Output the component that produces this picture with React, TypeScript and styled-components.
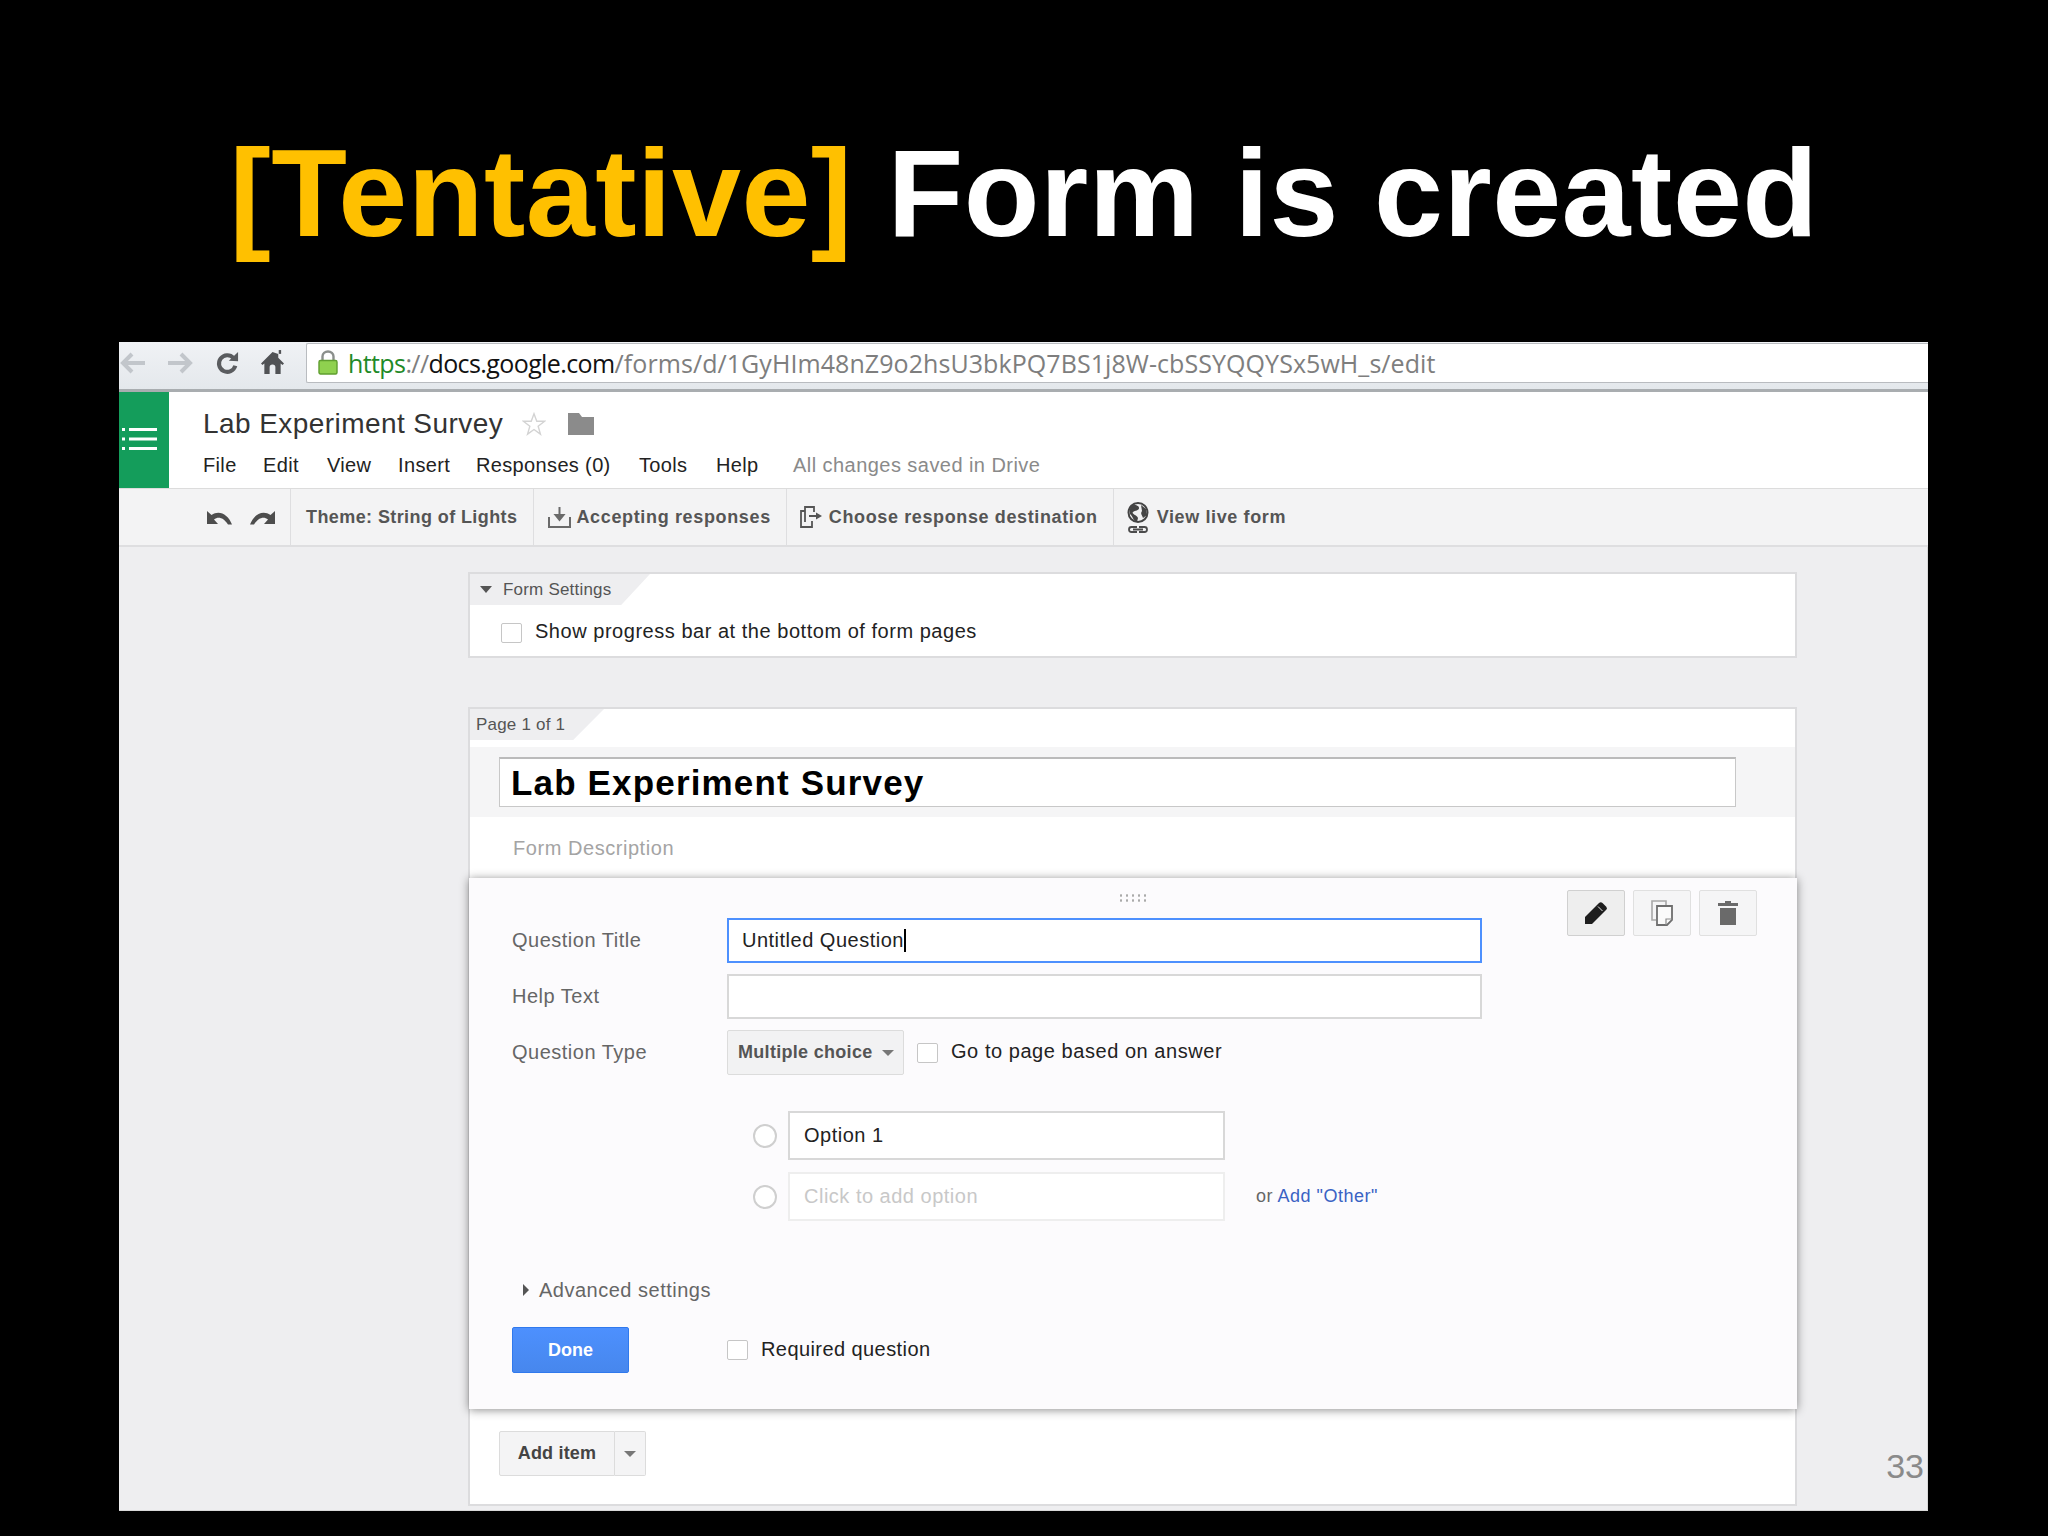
import React from "react";
import styled, { createGlobalStyle } from "styled-components";

const GlobalStyle = createGlobalStyle`
  html, body {
    margin: 0;
    padding: 0;
    background: #000;
  }
  body {
    font-family: "Liberation Sans", Arial, sans-serif;
  }
`;

const MENU_ITEMS = [
  { label: "File", width: 60 },
  { label: "Edit", width: 64 },
  { label: "View", width: 71 },
  { label: "Insert", width: 78 },
  { label: "Responses (0)", width: 163 },
  { label: "Tools", width: 77 },
  { label: "Help", width: 77 },
];

const BackIcon = () => (
  <svg width="26" height="24" viewBox="0 0 26 24">
    <path d="M12 3 3 12l9 9M3 12h22" fill="none" stroke="#c2c6cb" strokeWidth="4" />
  </svg>
);

const ForwardIcon = () => (
  <svg width="26" height="24" viewBox="0 0 26 24">
    <path d="M14 3l9 9-9 9M23 12H1" fill="none" stroke="#c2c6cb" strokeWidth="4" />
  </svg>
);

const ReloadIcon = () => (
  <svg width="26" height="24" viewBox="0 0 26 26">
    <path d="M20 7.500A9 9 0 1 0 22 16" fill="none" stroke="#5a5c5f" strokeWidth="4.400" />
    <path d="M15 10.500 25 11V1z" fill="#5a5c5f" />
  </svg>
);

const HomeIcon = () => (
  <svg width="23" height="25" viewBox="0 0 24 26">
    <path d="M12 2 0 14l1.500 1.500L3.500 14v11H9v-7a3 3 0 0 1 6 0v7h5.500V14l2 1.500L24 14l-6-6V4L12 2z" fill="#505255" />
    <path d="M18.500 0h2.500v4h-2.500z" fill="#505255" />
  </svg>
);

const LockIcon = () => (
  <svg width="20" height="25" viewBox="0 0 20 25">
    <path d="M4.500 11V6.500a5.500 5 0 0 1 11 0V11" fill="none" stroke="#8b8f8c" strokeWidth="2.400" />
    <rect x="1" y="10.500" width="18" height="13.500" rx="1.500" fill="#8fd14f" stroke="#5f9e2f" strokeWidth="1.400" />
  </svg>
);

const ListIcon = () => (
  <svg width="36" height="24" viewBox="0 0 36 24">
    <path d="M1 1h3v3H1zM1 10.500h3v3H1zM1 20h3v3H1z" fill="#fff" />
    <path d="M8 1h28v3H8zM8 10.500h28v3H8zM8 20h28v3H8z" fill="#fff" />
  </svg>
);

const StarIcon = () => (
  <svg width="24" height="26" viewBox="0 0 26 26">
    <path d="M13 2l3 8h8.500l-7 5.500L20 24l-7-5-7 5 2.500-8.500-7-5.500H10z" fill="none" stroke="#d3d3d3" strokeWidth="1.500" />
  </svg>
);

const FolderIcon = () => (
  <svg width="26" height="22" viewBox="0 0 26 22">
    <path d="M0 0h11l3 4h12v18H0z" fill="#8b8b8b" />
  </svg>
);

const UndoIcon = ({ flip }: { flip?: boolean }) => (
  <svg width="25" height="15" viewBox="0 0 25 15" style={flip ? { transform: "scaleX(-1)" } : undefined}>
    <path d="M0 1v13h11L7 9.500c4-3 9-2.500 14 5h4C21 4 12-.5 4.500 5z" fill="#4d4d4d" />
  </svg>
);

const AcceptIcon = () => (
  <svg width="23" height="22" viewBox="0 0 23 22">
    <path d="M1 11v10h21V11" fill="none" stroke="#6a6a6a" strokeWidth="2" />
    <path d="M11.500 1v10M7.500 9l4 5 4-5z" fill="#6a6a6a" stroke="#6a6a6a" strokeWidth="2" />
  </svg>
);

const DestinationIcon = () => (
  <svg width="22" height="22" viewBox="0 0 22 22">
    <path d="M5 16V1h9v5" fill="none" stroke="#555" strokeWidth="1.800" />
    <path d="M5 5H1v16h11v-6" fill="none" stroke="#555" strokeWidth="1.800" />
    <path d="M9 10h8" stroke="#555" strokeWidth="2" />
    <path d="M16 6.500l6 3.500-6 3.500z" fill="#555" />
  </svg>
);

const LiveFormIcon = () => (
  <svg width="22" height="31" viewBox="0 0 22 31">
    <circle cx="11" cy="10.500" r="9.500" fill="#f1f1f2" stroke="#444" strokeWidth="2" />
    <path d="M7 2c2 2 5 1 5 4s-4 2-6 4 4 3 5 6l-1 4C6 19 6 14 3 12 2 8 3 4 7 2zM14 3l5 4 1 6-4 3c-1-3-3-4-1-7z" fill="#444" />
    <path d="M10 25H4.500a2.500 2.500 0 0 0 0 5H10M12 25h5.500a2.500 2.500 0 0 1 0 5H12M6 27.500h10" fill="none" stroke="#4c4c4c" strokeWidth="1.800" />
  </svg>
);

const PencilIcon = () => (
  <svg width="22" height="22" viewBox="0 0 22 22">
    <path d="M0 22v-7L14 1a2.500 2.500 0 0 1 3.500 0L21 4.500a2.500 2.500 0 0 1 0 3.500L7 22z" fill="#1e1e1e" />
    <path d="M13 4.500 17.500 9" stroke="#e6e6e6" strokeWidth="1" />
  </svg>
);

const CopyIcon = () => (
  <svg width="22" height="26" viewBox="0 0 22 26">
    <path d="M15 5V1H1v19h4" fill="none" stroke="#a8a8a8" strokeWidth="1.600" />
    <path d="M6 6h15v14l-5 5H6z" fill="#fafafa" stroke="#6e6e6e" strokeWidth="1.800" />
    <path d="M21 19h-6v6" fill="none" stroke="#8a8a8a" strokeWidth="1.200" />
  </svg>
);

const TrashIcon = () => (
  <svg width="20" height="24" viewBox="0 0 20 24">
    <path d="M7 0h6v2h7v3H0V2h7zM2 7h16v17H2z" fill="#6a6a6a" />
  </svg>
);

export default function App() {
  return (
    <>
      <GlobalStyle />
      <Slide>
        <Heading>
          <Accent>[Tentative]</Accent> Form is created
        </Heading>
        <Shot>
          <BrowserBar>
            <NavIcons>
              <BackIcon />
              <ForwardIcon />
              <ReloadIcon />
              <HomeIcon />
            </NavIcons>
            <UrlBox>
              <LockIcon />
              <UrlText>
                <Https>https</Https>://<Domain>docs.google.com</Domain><UrlPath>/forms/d/1GyHIm48nZ9o2hsU3bkPQ7BS1j8W-cbSSYQQYSx5wH_s/edit</UrlPath>
              </UrlText>
            </UrlBox>
          </BrowserBar>

          <AppHeader>
            <AppTile>
              <ListIcon />
            </AppTile>
            <HeaderBody>
              <DocTitleRow>
                <DocTitle>Lab Experiment Survey</DocTitle>
                <StarIcon />
                <FolderSlot><FolderIcon /></FolderSlot>
              </DocTitleRow>
              <MenuRow>
                {MENU_ITEMS.map((item) => (
                  <MenuItem key={item.label} $width={item.width}>{item.label}</MenuItem>
                ))}
                <SavedNote>All changes saved in Drive</SavedNote>
              </MenuRow>
            </HeaderBody>
          </AppHeader>

          <Toolbar>
            <UndoGroup>
              <UndoIcon />
              <UndoIcon flip />
            </UndoGroup>
            <ToolItem $left={15} $right={16} $gap={5}>
              <ToolText $spacing={0.41}>Theme: String of Lights</ToolText>
            </ToolItem>
            <ToolItem $left={14} $right={15} $gap={5}>
              <AcceptIcon />
              <ToolText $spacing={0.65}>Accepting responses</ToolText>
            </ToolItem>
            <ToolItem $left={13} $right={15} $gap={7}>
              <DestinationIcon />
              <ToolText $spacing={0.62}>Choose response destination</ToolText>
            </ToolItem>
            <ToolItem $left={13} $right={14} $gap={8} $last>
              <LiveFormIcon />
              <ToolText $spacing={0.62}>View live form</ToolText>
            </ToolItem>
          </Toolbar>

          <Canvas>
            <SettingsPanel>
              <SettingsTab>
                <DownArrow />
                <TabText>Form Settings</TabText>
              </SettingsTab>
              <CheckRow $top={15} $left={31}>
                <Checkbox />
                <BodyText $spacing={0.53}>Show progress bar at the bottom of form pages</BodyText>
              </CheckRow>
            </SettingsPanel>

            <PagePanel>
              <PageTab>
                <TabText>Page 1 of 1</TabText>
              </PageTab>
              <TitleBand>
                <TitleInput>Lab Experiment Survey</TitleInput>
              </TitleBand>
              <Description>Form Description</Description>

              <QuestionCard>
                <DragHandle />
                <QuestionFields>
                  <FieldRow>
                    <FieldLabel>Question Title</FieldLabel>
                    <TextBox $focused>Untitled Question<Caret /></TextBox>
                  </FieldRow>
                  <FieldRow>
                    <FieldLabel>Help Text</FieldLabel>
                    <TextBox />
                  </FieldRow>
                  <FieldRow>
                    <FieldLabel>Question Type</FieldLabel>
                    <TypeRow>
                      <TypeSelect>
                        Multiple choice
                        <SmallDownArrow />
                      </TypeSelect>
                      <Checkbox />
                      <BodyText $spacing={0.55}>Go to page based on answer</BodyText>
                    </TypeRow>
                  </FieldRow>
                  <OptionList>
                    <OptionRow>
                      <Radio />
                      <OptionBox>Option 1</OptionBox>
                    </OptionRow>
                    <OptionRow>
                      <Radio />
                      <OptionBox $ghost>Click to add option</OptionBox>
                      <OtherNote>or <OtherLink>Add "Other"</OtherLink></OtherNote>
                    </OptionRow>
                  </OptionList>
                  <AdvancedRow>
                    <RightArrow />
                    <FieldLabel>Advanced settings</FieldLabel>
                  </AdvancedRow>
                  <DoneRow>
                    <DoneButton>Done</DoneButton>
                    <Checkbox />
                    <BodyText $spacing={0.42}>Required question</BodyText>
                  </DoneRow>
                </QuestionFields>
                <QuestionTools>
                  <ToolButton $active><PencilIcon /></ToolButton>
                  <ToolButton><CopyIcon /></ToolButton>
                  <ToolButton><TrashIcon /></ToolButton>
                </QuestionTools>
              </QuestionCard>

              <PanelFooter>
                <AddItemButton>Add item</AddItemButton>
                <AddItemCaret><SmallDownArrow /></AddItemCaret>
              </PanelFooter>
            </PagePanel>
            <SlideNumber>33</SlideNumber>
          </Canvas>
        </Shot>
      </Slide>
    </>
  );
}

const Slide = styled.div`
  width: 2048px;
  height: 1536px;
  background: #000;
  overflow: hidden;
`;

const Heading = styled.h1`
  box-sizing: border-box;
  height: 342px;
  margin: 0;
  padding-top: 124px;
  font-size: 124px;
  line-height: 138px;
  font-weight: 700;
  letter-spacing: 0.5px;
  text-align: center;
  color: #fff;
  white-space: nowrap;
`;

const Accent = styled.span`
  color: #ffc000;
`;

const Shot = styled.div`
  width: 1809px;
  height: 1169px;
  margin-left: 119px;
  background: #eeeef0;
  box-shadow: inset -1px -1px 0 #d8d8d8;
  display: flex;
  flex-direction: column;
`;

const BrowserBar = styled.div`
  box-sizing: border-box;
  height: 50px;
  display: flex;
  align-items: center;
  background: linear-gradient(#f0f2f5, #e4e8ec);
  border-bottom: 3px solid #a9adb0;
  padding-bottom: 6px;
`;

const NavIcons = styled.div`
  width: 187px;
  flex: none;
  display: flex;
  align-items: center;
  gap: 21px;
  padding-left: 1px;
  box-sizing: border-box;
`;

const UrlBox = styled.div`
  flex: 1;
  height: 40px;
  box-sizing: border-box;
  background: #fff;
  border: 1px solid #b9bcc0;
  border-right: none;
  border-radius: 2px 0 0 2px;
  display: flex;
  align-items: center;
  gap: 10px;
  padding-left: 11px;
`;

const UrlText = styled.div`
  font-family: "Open Sans", sans-serif;
  font-size: 25px;
  letter-spacing: -0.6px;
  color: #7e7e7e;
  white-space: nowrap;
`;

const Https = styled.span`
  color: #1f8a28;
`;

const Domain = styled.span`
  color: #111;
`;

const UrlPath = styled.span`
  letter-spacing: 0.07px;
`;

const AppHeader = styled.div`
  height: 97px;
  flex: none;
  display: flex;
  background: #fff;
  border-bottom: 1px solid #dcdcdc;
  box-sizing: border-box;
`;

const AppTile = styled.div`
  width: 50px;
  flex: none;
  background: #149d5b;
  display: flex;
  align-items: center;
  justify-content: center;
  padding: 0 10px 3px 0;
  box-sizing: border-box;
`;

const HeaderBody = styled.div`
  padding-left: 34px;
  display: flex;
  flex-direction: column;
`;

const DocTitleRow = styled.div`
  display: flex;
  align-items: center;
  gap: 19px;
  height: 48px;
  padding-top: 16px;
  box-sizing: border-box;
`;

const DocTitle = styled.div`
  font-size: 28px;
  letter-spacing: 0.43px;
  color: #333;
  white-space: nowrap;
`;

const FolderSlot = styled.span`
  display: flex;
  margin-left: 3px;
`;

const MenuRow = styled.div`
  display: flex;
  align-items: center;
  height: 32px;
  margin-top: 9px;
`;

const MenuItem = styled.div<{ $width: number }>`
  width: ${(p) => p.$width}px;
  flex: none;
  font-size: 20px;
  letter-spacing: 0.35px;
  color: #222;
  white-space: nowrap;
`;

const SavedNote = styled.div`
  font-size: 20px;
  color: #8a8a8a;
  white-space: nowrap;
  letter-spacing: 0.45px;
`;

const Toolbar = styled.div`
  height: 58px;
  flex: none;
  display: flex;
  background: #f3f3f4;
  border-bottom: 2px solid #dedee0;
  box-sizing: border-box;
`;

const UndoGroup = styled.div`
  width: 172px;
  flex: none;
  box-sizing: border-box;
  padding-left: 88px;
  display: flex;
  align-items: center;
  gap: 18px;
  border-right: 1px solid #dedee0;
`;

const ToolItem = styled.div<{ $left: number; $right: number; $gap: number; $last?: boolean }>`
  flex: none;
  display: flex;
  align-items: center;
  gap: ${(p) => p.$gap}px;
  padding: 0 ${(p) => p.$right}px 0 ${(p) => p.$left}px;
  border-right: ${(p) => (p.$last ? "none" : "1px solid #dedee0")};
`;

const ToolText = styled.span<{ $spacing: number }>`
  font-size: 18px;
  font-weight: 700;
  letter-spacing: ${(p) => p.$spacing}px;
  color: #555;
  white-space: nowrap;
`;

const Canvas = styled.div`
  position: relative;
  flex: 1;
  padding: 25px 131px 0 349px;
  display: flex;
  flex-direction: column;
  min-height: 0;
`;

const SettingsPanel = styled.div`
  box-sizing: border-box;
  height: 86px;
  background: #fff;
  border: 2px solid #dcdcde;
`;

const SettingsTab = styled.div`
  box-sizing: border-box;
  width: 180px;
  height: 31px;
  display: flex;
  align-items: center;
  gap: 11px;
  padding-left: 10px;
  background: #eeeef0;
  clip-path: polygon(0 0, 100% 0, 84% 100%, 0 100%);
`;

const DownArrow = styled.span`
  width: 0;
  height: 0;
  border-left: 6px solid transparent;
  border-right: 6px solid transparent;
  border-top: 7px solid #555;
`;

const SmallDownArrow = styled.span`
  display: inline-block;
  width: 0;
  height: 0;
  border-left: 6px solid transparent;
  border-right: 6px solid transparent;
  border-top: 6px solid #777;
`;

const RightArrow = styled.span`
  width: 0;
  height: 0;
  border-top: 6px solid transparent;
  border-bottom: 6px solid transparent;
  border-left: 6px solid #555;
`;

const TabText = styled.span`
  font-size: 17px;
  letter-spacing: 0.2px;
  color: #555;
  white-space: nowrap;
`;

const CheckRow = styled.div<{ $top: number; $left: number }>`
  display: flex;
  align-items: center;
  gap: 13px;
  margin: ${(p) => p.$top}px 0 0 ${(p) => p.$left}px;
`;

const Checkbox = styled.span`
  width: 21px;
  height: 20px;
  flex: none;
  box-sizing: border-box;
  background: #fff;
  border: 1.5px solid #c6c6c6;
  border-radius: 2px;
`;

const BodyText = styled.span<{ $spacing: number }>`
  font-size: 20px;
  letter-spacing: ${(p) => p.$spacing}px;
  color: #222;
  white-space: nowrap;
  margin-bottom: 2px;
`;

const PagePanel = styled.div`
  box-sizing: border-box;
  height: 799px;
  margin-top: 49px;
  background: #fff;
  border: 2px solid #dcdcde;
  display: flex;
  flex-direction: column;
`;

const PageTab = styled.div`
  box-sizing: border-box;
  width: 134px;
  height: 31px;
  flex: none;
  display: flex;
  align-items: center;
  padding-left: 6px;
  background: #eeeef0;
  clip-path: polygon(0 0, 100% 0, 77% 100%, 0 100%);
`;

const TitleBand = styled.div`
  box-sizing: border-box;
  height: 70px;
  flex: none;
  margin-top: 7px;
  padding: 10px 59px 0 29px;
  background: #f5f5f6;
`;

const TitleInput = styled.div`
  box-sizing: border-box;
  height: 50px;
  padding-left: 11px;
  display: flex;
  align-items: center;
  background: #fff;
  border: 1px solid #c8c8c8;
  border-top: 2px solid #bbb;
  font-size: 35px;
  font-weight: 700;
  letter-spacing: 1.16px;
  color: #000;
  white-space: nowrap;
`;

const Description = styled.div`
  box-sizing: border-box;
  height: 61px;
  flex: none;
  padding: 20px 0 0 43px;
  font-size: 20px;
  letter-spacing: 0.55px;
  color: #a4a4a4;
`;

const QuestionCard = styled.div`
  position: relative;
  box-sizing: border-box;
  height: 531px;
  flex: none;
  margin: 0 -2px 0 -1px;
  padding: 12px 40px 0 43px;
  display: flex;
  justify-content: space-between;
  background: #fcfbfd;
  box-shadow: 0 1px 9px rgba(0, 0, 0, 0.45);
`;

const DragHandle = styled.span`
  position: absolute;
  top: 15px;
  left: 50%;
  width: 30px;
  height: 10px;
  margin-left: -15px;
  background-image: radial-gradient(#aaa 1.2px, transparent 1.5px);
  background-size: 6px 5px;
`;

const QuestionFields = styled.div`
  display: flex;
  flex-direction: column;
  padding-top: 28px;
`;

const FieldRow = styled.div`
  display: grid;
  grid-template-columns: 215px 755px;
  align-items: center;
  height: 45px;
  margin-bottom: 11px;
`;

const FieldLabel = styled.span`
  font-size: 20px;
  letter-spacing: 0.5px;
  color: #666;
  white-space: nowrap;
`;

const TextBox = styled.div<{ $focused?: boolean }>`
  box-sizing: border-box;
  height: 45px;
  padding-left: 13px;
  display: flex;
  align-items: center;
  background: #fff;
  border: 2px solid ${(p) => (p.$focused ? "#4d90fe" : "#d8d8d8")};
  font-size: 20px;
  letter-spacing: 0.5px;
  color: #222;
  white-space: nowrap;
`;

const Caret = styled.span`
  width: 2px;
  height: 23px;
  background: #000;
`;

const TypeRow = styled.div`
  display: flex;
  align-items: center;
  gap: 13px;
`;

const TypeSelect = styled.div`
  box-sizing: border-box;
  width: 177px;
  height: 45px;
  display: flex;
  align-items: center;
  justify-content: space-between;
  padding: 0 9px 0 10px;
  background: #f2f2f3;
  border: 1px solid #dcdcdc;
  border-radius: 2px;
  font-size: 18px;
  font-weight: 700;
  letter-spacing: 0.3px;
  color: #555;
  white-space: nowrap;
`;

const OptionList = styled.div`
  display: flex;
  flex-direction: column;
  gap: 12px;
  margin-top: 25px;
  padding-left: 241px;
`;

const OptionRow = styled.div`
  display: flex;
  align-items: center;
`;

const Radio = styled.span`
  width: 24px;
  height: 24px;
  flex: none;
  box-sizing: border-box;
  border: 2px solid #cfcfcf;
  border-radius: 50%;
  background: #fff;
`;

const OptionBox = styled.div<{ $ghost?: boolean }>`
  box-sizing: border-box;
  width: 437px;
  height: 49px;
  margin-left: 11px;
  padding-left: 14px;
  display: flex;
  align-items: center;
  background: #fff;
  border: 2px solid ${(p) => (p.$ghost ? "#eeeeee" : "#d8d8d8")};
  font-size: 20px;
  letter-spacing: 0.5px;
  color: ${(p) => (p.$ghost ? "#c8c8c8" : "#222")};
  white-space: nowrap;
`;

const OtherNote = styled.span`
  margin-left: 31px;
  font-size: 18px;
  letter-spacing: 0.5px;
  color: #666;
  white-space: nowrap;
`;

const OtherLink = styled.span`
  color: #3a62c4;
`;

const AdvancedRow = styled.div`
  display: flex;
  align-items: center;
  gap: 10px;
  height: 24px;
  margin-top: 57px;
  padding-left: 11px;
`;

const DoneRow = styled.div`
  display: flex;
  align-items: center;
  margin-top: 25px;
  & > span:last-child {
    margin-left: 13px;
  }
`;

const DoneButton = styled.div`
  box-sizing: border-box;
  width: 117px;
  height: 46px;
  margin-right: 98px;
  display: flex;
  align-items: center;
  justify-content: center;
  background: linear-gradient(#4d90fe, #4787ed);
  border: 1px solid #3079ed;
  border-radius: 2px;
  font-size: 18px;
  font-weight: 700;
  color: #fff;
`;

const QuestionTools = styled.div`
  display: flex;
  gap: 8px;
  align-items: flex-start;
`;

const ToolButton = styled.div<{ $active?: boolean }>`
  box-sizing: border-box;
  width: 58px;
  height: 46px;
  display: flex;
  align-items: center;
  justify-content: center;
  background: ${(p) => (p.$active ? "#eeeeee" : "#f5f5f6")};
  border: 1px solid ${(p) => (p.$active ? "#d0d0d0" : "#e0e0e0")};
  border-radius: 2px;
`;

const PanelFooter = styled.div`
  display: flex;
  padding: 22px 0 0 29px;
`;

const AddItemButton = styled.div`
  box-sizing: border-box;
  width: 116px;
  height: 45px;
  display: flex;
  align-items: center;
  justify-content: center;
  background: #f4f4f5;
  border: 1px solid #dcdcdc;
  border-radius: 2px 0 0 2px;
  font-size: 18px;
  font-weight: 700;
  letter-spacing: 0.2px;
  color: #444;
  white-space: nowrap;
`;

const AddItemCaret = styled.div`
  box-sizing: border-box;
  width: 31px;
  height: 45px;
  display: flex;
  align-items: center;
  justify-content: center;
  background: #f4f4f5;
  border: 1px solid #dcdcdc;
  border-left: none;
  border-radius: 0 2px 2px 0;
`;

const SlideNumber = styled.span`
  position: absolute;
  right: 4px;
  bottom: 25px;
  font-size: 34px;
  line-height: 40px;
  color: #8a8a8a;
`;
